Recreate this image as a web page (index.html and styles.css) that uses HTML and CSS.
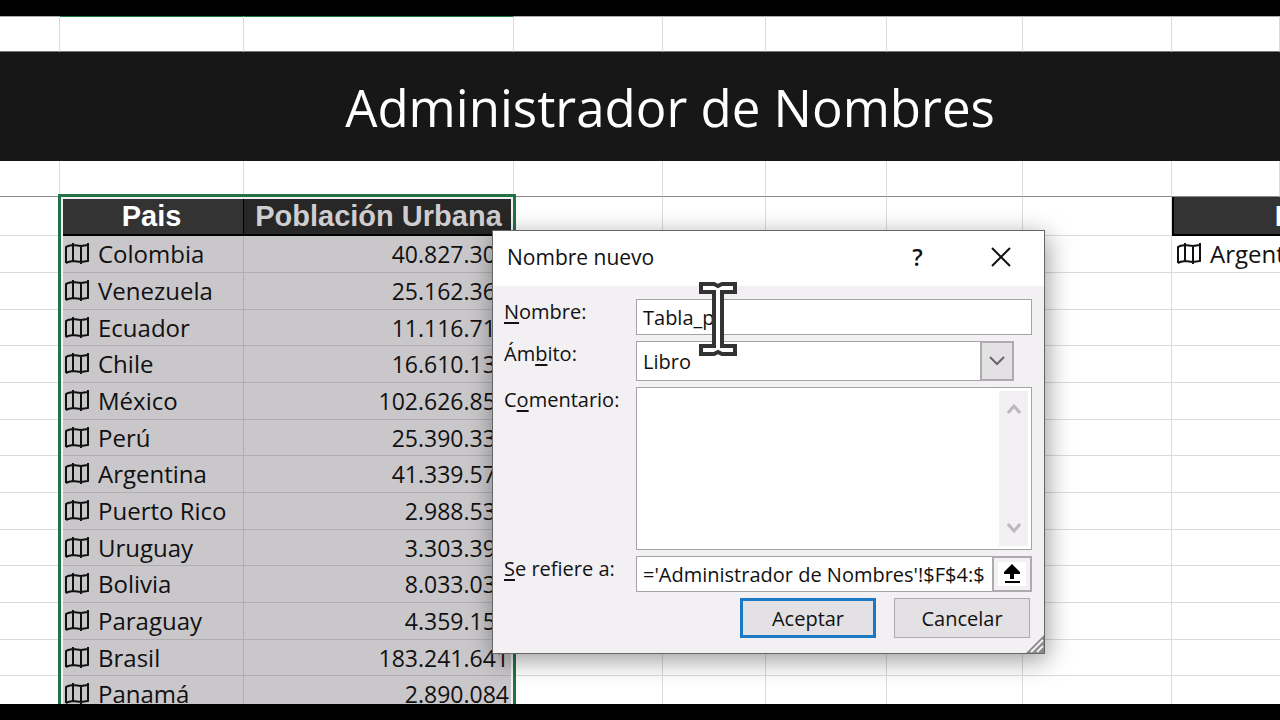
FILE: index.html
```html
<!DOCTYPE html>
<html lang="es">
<head>
    <meta charset="UTF-8">
    <meta name="viewport" content="width=device-width, initial-scale=1.0">
    <title>Administrador de Nombres</title>
    <link rel="stylesheet" href="styles.css">
</head>
<body>
    <svg class="hide">
        <symbol id="map" viewBox="0 0 26 22">
            <path d="M2 20V4L4 3L9 2L17 3L24 2V18L17 19L9 18L4 19L2 20M9 0V19M17 2V21M24 0V18" fill="none" stroke="currentColor" stroke-width="2"/>
        </symbol>
    </svg>

    <main class="sheet">
        <table class="grid">
            <colgroup>
                <col class="col-a"><col class="col-b"><col class="col-c"><col class="col-d"><col class="col-e">
                <col class="col-f"><col class="col-g"><col class="col-h"><col class="col-i"><col class="col-j">
            </colgroup>
            <thead>
                <tr class="top-row">
                    <td></td><td class="edge"></td><td class="edge"></td><td></td><td></td>
                    <td></td><td></td><td></td><td></td><td></td>
                </tr>
                <tr class="banner">
                    <td></td><td colspan="8"><h1>Administrador de Nombres</h1></td><td></td>
                </tr>
                <tr class="space-row">
                    <td></td><td></td><td></td><td></td><td></td>
                    <td></td><td></td><td></td><td></td><td></td>
                </tr>
                <tr class="head-row">
                    <td></td><th>Pais</th><th class="dim">Población Urbana</th><td></td><td></td>
                    <td></td><td></td><td></td><th class="side" colspan="2">Pais</th>
                </tr>
            </thead>
            <tbody id="rows"></tbody>
        </table>
        <div class="selection"></div>
    </main>

    <form class="dialog" role="dialog" aria-labelledby="dialog-title">
        <header class="title-bar">
            <h2 id="dialog-title">Nombre nuevo</h2>
            <button type="button" class="title-btn help" aria-label="Ayuda">?</button>
            <button type="button" class="title-btn" aria-label="Cerrar">
                <svg width="20" height="20" viewBox="0 0 20 20"><path d="M1 1L19 19M19 1L1 19" fill="none" stroke="#111" stroke-width="2"/></svg>
            </button>
        </header>
        <div class="fields">
            <label for="nombre"><u>N</u>ombre:</label>
            <input id="nombre" class="box" type="text" value="Tabla_p">

            <label for="ambito">Ám<u>b</u>ito:</label>
            <div class="select-wrap">
                <select id="ambito" class="box">
                    <option>Libro</option>
                </select>
                <span class="arrow">
                    <svg width="16" height="10" viewBox="0 0 16 10"><path d="M1 1L8 8L15 1" fill="none" stroke="#666" stroke-width="2"/></svg>
                </span>
            </div>

            <label for="comentario">C<u>o</u>mentario:</label>
            <div class="comment box">
                <textarea id="comentario"></textarea>
                <div class="scroll">
                    <svg width="14" height="12" viewBox="0 0 14 12"><path d="M1 10L7 3L13 10" fill="none" stroke="#bbb9bc" stroke-width="3"/></svg>
                    <svg width="14" height="12" viewBox="0 0 14 12"><path d="M1 2L7 9L13 2" fill="none" stroke="#bbb9bc" stroke-width="3"/></svg>
                </div>
            </div>

            <label for="refiere"><u>S</u>e refiere a:</label>
            <div class="refers">
                <input id="refiere" class="box" type="text" value="='Administrador de Nombres'!$F$4:$G$17">
                <button type="button" class="collapse" aria-label="Contraer">
                    <svg width="18" height="20" viewBox="0 0 18 20"><path d="M9 0L17 8V10H11V15H7V10H1V8ZM2 17H17V19H2Z" fill="#000"/></svg>
                </button>
            </div>
        </div>
        <div class="actions">
            <button type="submit" class="btn primary">Aceptar</button>
            <button type="button" class="btn">Cancelar</button>
        </div>
        <svg class="grip" width="18" height="18" viewBox="0 0 18 18">
            <path d="M0 18L18 0V18Z" fill="#8a888b"/>
            <path d="M5 17L17 5M11 17L17 11" stroke="#f2f0f3" stroke-width="2"/>
        </svg>
        <svg class="cursor" width="38" height="76" viewBox="0 0 38 76">
            <path d="M2 3H15L19 5L23 3H36V11H23V65H36V73H23L19 71L15 73H2V65H15V11H2Z" fill="#fff" stroke="#333" stroke-width="4"/>
        </svg>
    </form>

    <script>
        const countries = [
            ["Colombia", "40.827.302"],
            ["Venezuela", "25.162.368"],
            ["Ecuador", "11.116.711"],
            ["Chile", "16.610.135"],
            ["México", "102.626.859"],
            ["Perú", "25.390.339"],
            ["Argentina", "41.339.571"],
            ["Puerto Rico", "2.988.531"],
            ["Uruguay", "3.303.394"],
            ["Bolivia", "8.033.035"],
            ["Paraguay", "4.359.150"],
            ["Brasil", "183.241.641"],
            ["Panamá", "2.890.084"],
        ];

        const place = (name) => `<svg class="map"><use href="#map"/></svg>${name}`;

        document.querySelector("#rows").innerHTML = countries.map(([name, total], i) => `
            <tr>
                <td></td>
                <td class="picked">${place(name)}</td>
                <td class="picked number">${total}</td>
                <td></td><td></td><td></td><td></td><td></td>
                <td colspan="2">${i === 0 ? place("Argentina") : ""}</td>
            </tr>`).join("");
    </script>
</body>
</html>
```
FILE: styles.css
```css
* {
    margin: 0;
    padding: 0;
    box-sizing: border-box;
}
body {
    height: 100vh;
    padding: 16px 0;
    background-color: #000;
    color: #111;
    overflow: hidden;
    font-family: "Open Sans", sans-serif;
}
.hide {
    display: none;
}

/* Spreadsheet */
.sheet {
    position: relative;
    height: 100%;
    overflow: hidden;
    background-color: #fff;
}
.grid {
    width: 1436px;
    table-layout: fixed;
    border-collapse: separate;
    border-spacing: 0;
    font-size: 24px;
    line-height: 32px;
}
.col-a { width: 60px; }
.col-b { width: 184px; }
.col-c { width: 270px; }
.col-d { width: 149px; }
.col-e { width: 103px; }
.col-f { width: 121px; }
.col-g { width: 136px; }
.col-h { width: 149px; }
.col-i { width: 108px; }
.col-j { width: 156px; }
.grid td {
    border-right: 1px solid #dcdadd;
    border-bottom: 1px solid #dcdadd;
    white-space: nowrap;
}
.grid tbody tr {
    height: 37px;
}
.grid tbody tr:nth-child(3n) {
    height: 36px;
}
.grid .top-row {
    height: 36px;
}
.grid .top-row td {
    border-top: 1px solid #aaa;
    border-bottom-color: #777;
}
.grid .top-row .edge {
    border-top-color: #217346;
}
.grid .banner {
    height: 109px;
}
.grid .banner td {
    border: none;
    background-color: #171717;
    text-align: center;
}
h1 {
    color: #fff;
    font-size: 51px;
    font-weight: 400;
    line-height: 70px;
}
.grid .space-row {
    height: 36px;
}
.grid .space-row td {
    border-bottom-color: #8a888b;
}
.grid .head-row {
    height: 39px;
}
th {
    border-right: 1px solid #000;
    border-bottom: 2px solid #000;
    background-color: #333;
    color: #fff;
    font-family: "Liberation Sans", sans-serif;
    font-size: 29px;
    white-space: nowrap;
}
th.dim {
    background-color: #272727;
    color: #cfcdd0;
}
th.side {
    border-left: 2px solid #000;
}
.grid .picked {
    background-color: #c9c7ca;
    border-color: #b0aeb1;
}
.grid .number {
    padding-right: 4px;
    font-size: 23px;
    text-align: right;
}
.map {
    width: 26px;
    height: 22px;
    margin: 0 8px 0 4px;
    vertical-align: -2px;
}
.selection {
    position: absolute;
    top: 178px;
    bottom: -8px;
    left: 58px;
    width: 458px;
    border: 3px solid #217346;
    box-shadow: inset 0 0 0 2px #f4f2f5;
}

/* Dialog */
.dialog {
    position: absolute;
    top: 230px;
    left: 492px;
    width: 553px;
    border: 1px solid #666;
    background-color: #f2f0f3;
    box-shadow: 2px 6px 24px rgba(0, 0, 0, 0.4);
    font-size: 20px;
}
.dialog input,
.dialog select,
.dialog textarea,
.dialog button {
    color: #111;
    font-family: inherit;
    font-size: 20px;
    outline: none;
}
.title-bar {
    display: flex;
    align-items: center;
    height: 55px;
    padding: 0 2px 4px 14px;
    background-color: #fff;
}
h2 {
    flex: 1;
    font-size: 21px;
    font-weight: 400;
}
.title-btn {
    width: 83px;
    height: 50px;
    border: none;
    background: none;
}
.dialog .help {
    font-size: 23px;
    font-weight: 600;
}
.title-btn svg {
    display: block;
    margin: 0 auto;
}
.fields {
    display: grid;
    grid-template-columns: 132px 1fr;
    row-gap: 6px;
    padding: 13px 12px 6px 11px;
}
.fields label {
    line-height: 26px;
}
u {
    text-underline-offset: 3px;
}
.box {
    width: 100%;
    height: 36px;
    padding: 0 6px;
    border: 1px solid #a5a3a6;
    border-radius: 0;
    background-color: #fff;
}
.select-wrap {
    position: relative;
    margin-right: 18px;
}
.select-wrap select {
    display: block;
    height: 40px;
    appearance: none;
}
.arrow {
    position: absolute;
    top: 0;
    right: 0;
    display: flex;
    align-items: center;
    justify-content: center;
    width: 34px;
    height: 40px;
    border: 2px solid #adabae;
    background-color: #e3e1e4;
    pointer-events: none;
}
.comment {
    display: flex;
    height: 163px;
    padding: 3px;
}
.comment textarea {
    flex: 1;
    border: none;
    resize: none;
}
.scroll {
    display: flex;
    flex-direction: column;
    align-items: center;
    justify-content: space-between;
    width: 29px;
    padding: 12px 0;
    background-color: #f2f0f3;
}
.refers {
    display: flex;
}
.refers input {
    flex: 1;
    min-width: 0;
    padding-right: 8px;
    border-right: none;
}
.collapse {
    display: flex;
    align-items: center;
    justify-content: center;
    width: 40px;
    height: 36px;
    border: 2px solid #adabae;
    background-color: #fff;
    box-shadow: inset 0 0 0 4px #f2f0f3;
}
.actions {
    display: flex;
    justify-content: flex-end;
    gap: 18px;
    padding: 0 14px 15px;
}
.btn {
    width: 136px;
    height: 40px;
    border: 1px solid #adabae;
    background-color: #e3e1e4;
}
.btn.primary {
    border: 3px solid #1b78c2;
}
.grip {
    position: absolute;
    right: 0;
    bottom: 0;
}
.cursor {
    position: absolute;
    top: 50px;
    left: 206px;
}
```
